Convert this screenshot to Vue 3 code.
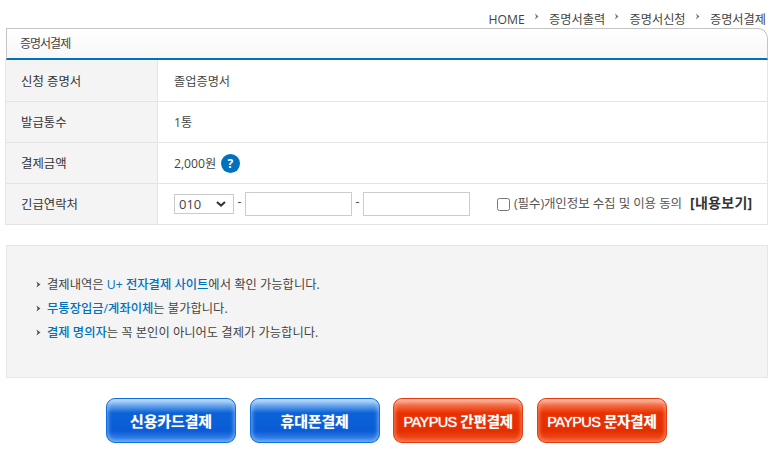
<script setup>
const rowsTop = [
  { label: '신청 증명서', value: '졸업증명서' },
  { label: '발급통수', value: '1통' },
]
const notes = [
  [{ t: '결제내역은 ' }, { t: 'U+ 전자결제 사이트', b: true }, { t: '에서 확인 가능합니다.' }],
  [{ t: '무통장입금/계좌이체', b: true }, { t: '는 불가합니다.' }],
  [{ t: '결제 명의자', b: true }, { t: '는 꼭 본인이 아니어도 결제가 가능합니다.' }],
]
const crumbs = ['증명서출력', '증명서신청', '증명서결제']
const buttons = [
  { t: '신용카드결제', c: 'blue' },
  { t: '휴대폰결제', c: 'blue' },
  { l: 'PAYPUS', t: ' 간편결제', c: 'red' },
  { l: 'PAYPUS', t: ' 문자결제', c: 'red' },
]
</script>

<template>
  <div class="page">
    <nav class="crumbs">
      <span>HOME</span>
      <template v-for="c in crumbs" :key="c">
        <svg class="chev" width="6" height="7" viewBox="0 0 6 7"><path d="M1 0.5 L4.5 3.5 L1 6.5 L2 3.5 Z" fill="#777" /></svg>
        <span>{{ c }}</span>
      </template>
    </nav>
    <section class="panel">
      <h2 class="title">증명서결제</h2>
      <div class="row" v-for="r in rowsTop" :key="r.label">
        <div class="th">{{ r.label }}</div>
        <div class="td">{{ r.value }}</div>
      </div>
      <div class="row">
        <div class="th">결제금액</div>
        <div class="td">2,000원<span class="help">?</span></div>
      </div>
      <div class="row">
        <div class="th">긴급연락처</div>
        <div class="td phone">
          <div class="selwrap">
            <select class="sel"><option>010</option></select>
            <svg class="selarrow" width="10" height="6" viewBox="0 0 10 6"><path d="M1 1 L5 4.6 L9 1" fill="none" stroke="#333" stroke-width="2" /></svg>
          </div>
          <span class="dash">-</span>
          <input class="inp" type="text" />
          <span class="dash">-</span>
          <input class="inp" type="text" />
          <label class="agree"><input class="chk" type="checkbox" /><span class="agree-text">(필수)개인정보 수집 및 이용 동의</span></label>
          <strong class="view">[내용보기]</strong>
        </div>
      </div>
    </section>
    <section class="notice">
      <p class="note" v-for="(n, i) in notes" :key="i">
        <svg class="arrow" width="5" height="7" viewBox="0 0 5 7"><path d="M0.5 0.5 L4.5 3.5 L0.5 6.5 L1.5 3.5 Z" fill="#555" /></svg>
        <span><template v-for="(s, j) in n" :key="j"><b v-if="s.b">{{ s.t }}</b><template v-else>{{ s.t }}</template></template></span>
      </p>
    </section>
    <div class="actions">
      <button v-for="b in buttons" :key="b.t" class="btn" :class="b.c"><span v-if="b.l" class="latin">{{ b.l }}</span>{{ b.t }}</button>
    </div>
  </div>
</template>

<style>
html, body { margin: 0; background: #fff; }
</style>

<style scoped>
.page {
  width: 776px;
  height: 457px;
  overflow: hidden;
  box-sizing: border-box;
  padding: 0 8px 0 6px;
  font-family: "Open Sans", "Noto Sans CJK KR", sans-serif;
  font-size: 12px;
  color: #444;
}
.crumbs {
  height: 28px;
  display: flex;
  justify-content: flex-end;
  align-items: center;
  padding-top: 11px;
  box-sizing: border-box;
  gap: 9.2px;
  margin-right: 2px;
  font-size: 12.2px;
  line-height: 18px;
  white-space: nowrap;
}
.chev { margin-top: -7px; }
.panel { display: block; }
.title {
  margin: 0;
  height: 32px;
  box-sizing: border-box;
  border: 1px solid #c4c4c4;
  border-bottom: 2px solid #0071bc;
  border-radius: 0 10px 0 0;
  background: linear-gradient(#fff, #f7f7f7);
  padding-left: 13px;
  font-size: 12px;
  font-weight: 400;
  line-height: 29px;
  letter-spacing: -1px;
  color: #444;
}
.row {
  display: flex;
  height: 41px;
  margin-left: -1px;
  box-sizing: border-box;
  border-bottom: 1px solid #e4e4e4;
  border-left: 1px solid #e4e4e4;
  border-right: 1px solid #e4e4e4;
}
.row:first-of-type { height: 42px; }
.th {
  width: 152px;
  flex: none;
  box-sizing: border-box;
  background: #f4f4f4;
  border-right: 1px solid #e4e4e4;
  padding-left: 15px;
  display: flex;
  align-items: center;
  color: #333;
  font-size: 12.4px;
}
.td {
  flex: 1;
  padding-left: 16px;
  display: flex;
  align-items: center;
  white-space: nowrap;
  font-size: 12.2px;
}
.help {
  width: 19px;
  height: 19px;
  border-radius: 50%;
  background: #0071bc;
  color: #fff;
  font-weight: 700;
  font-size: 12px;
  line-height: 19px;
  text-align: center;
  margin-left: 4.5px;
}
.selwrap { position: relative; display: flex; }
.sel {
  appearance: none;
  width: 60px;
  height: 20px;
  box-sizing: border-box;
  border: 1px solid #ccc;
  background: #fff;
  font-family: inherit;
  font-size: 13px;
  color: #444;
  padding: 0 0 0 4px;
  border-radius: 0;
}
.selarrow { position: absolute; right: 8px; top: 7px; pointer-events: none; }
.dash { width: 11px; text-align: center; margin: -5px 0 0 0; }
.inp {
  width: 107px;
  height: 24px;
  box-sizing: border-box;
  border: 1px solid #ccc;
  padding: 0;
  margin: 0;
  border-radius: 0;
}
.agree {
  display: flex;
  align-items: center;
  margin-left: 27px;
  font-size: 12.5px;
  letter-spacing: -0.1px;
  color: #555;
}
.agree-text { margin-top: -3px; }
.chk { width: 13px; height: 13px; margin: 1px 4px 0 0; }
.view { margin-left: 8px; font-size: 14px; letter-spacing: 0.3px; color: #333; margin-top: -5px; }
.notice {
  margin-top: 20px;
  height: 133px;
  box-sizing: border-box;
  background: #f4f4f4;
  border: 1px solid #e6e6e6;
  padding: 26px 0 0 29px;
}
.note {
  margin: 0;
  height: 24.2px;
  display: flex;
  align-items: center;
  gap: 6px;
  font-size: 12.3px;
  color: #444;
}
.note b { color: #0071bc; font-weight: 500; }
.actions {
  margin-top: 20px;
  display: flex;
  gap: 13.67px;
  padding-left: 100px;
}
.btn {
  width: 130px;
  height: 45px;
  box-sizing: border-box;
  border-radius: 9px;
  color: #fff;
  font-family: inherit;
  font-size: 15px;
  font-weight: 700;
  letter-spacing: -0.15px;
  padding: 0;
  text-shadow: 0 0 1px rgba(255, 255, 255, 0.5);
}
.latin { font-family: "Liberation Sans", sans-serif; font-size: 14.5px; font-weight: 400; letter-spacing: -0.6px; text-shadow: 0 0 1px #fff; }
.red { font-size: 14.5px; }
.blue {
  border: 1px solid #0a6fe0;
  background: linear-gradient(#cfe4fb 0, #6fa9ee 6px, #0b62d8 14px, #0a5cd6 32px, #4a93ee 44px);
  box-shadow: inset 0 0 4px 1px rgba(170, 210, 255, 0.7);
}
.red {
  border: 1px solid #e63a10;
  background: linear-gradient(#fbc7b5 0, #f5704a 6px, #e93100 14px, #e52e00 32px, #f35b2c 44px);
  box-shadow: inset 0 0 4px 1px rgba(255, 170, 140, 0.7);
}
</style>
